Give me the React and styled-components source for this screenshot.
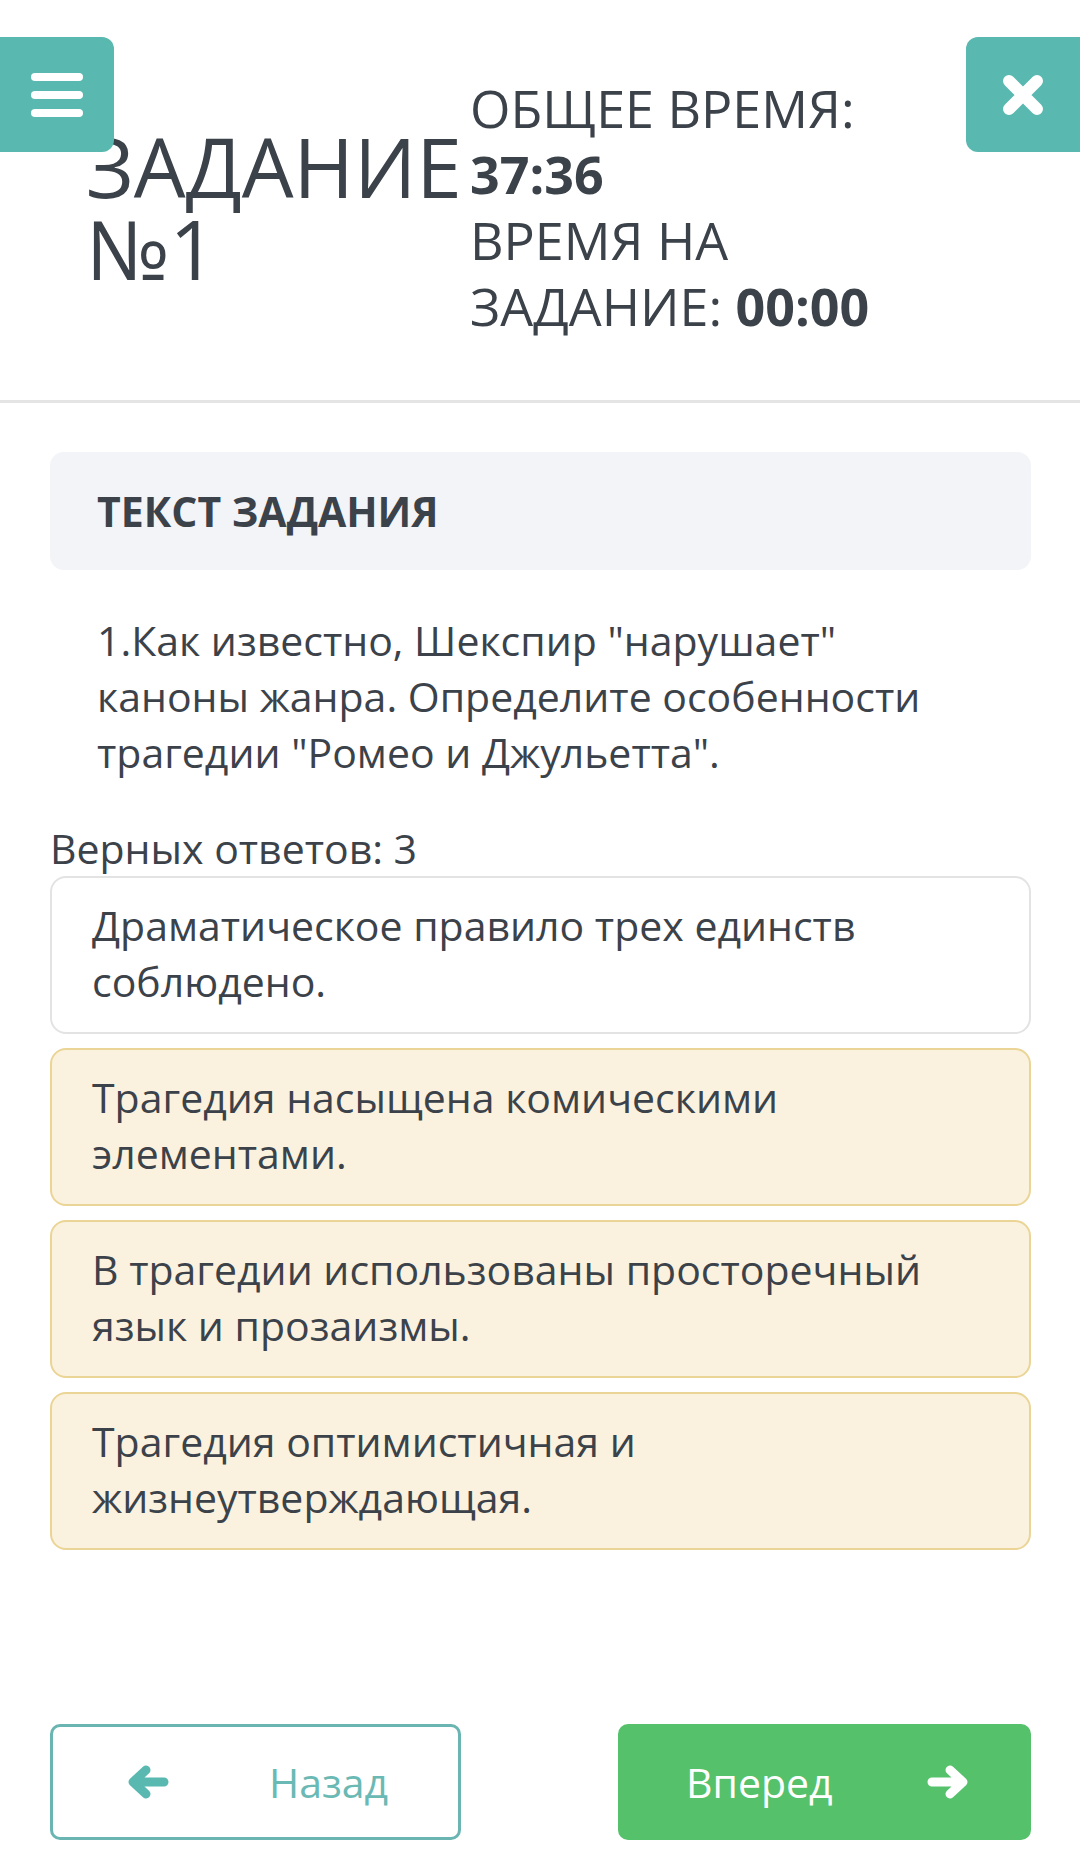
import React from "react";
import styled, { createGlobalStyle } from "styled-components";

const GlobalStyle = createGlobalStyle`
  html, body {
    margin: 0;
    padding: 0;
    background: #ffffff;
  }
  body {
    font-family: "Open Sans", "Noto Sans", sans-serif;
    color: #3c424a;
  }
`;

const Page = styled.div`
  position: relative;
  width: 1080px;
  min-height: 1864px;
  display: flex;
  flex-direction: column;
  box-sizing: border-box;
`;

const Header = styled.header`
  display: flex;
  align-items: center;
  padding: 75px 0 61px 86px;
  border-bottom: 3px solid #e4e4e4;
`;

const Title = styled.h1`
  flex: 0 0 384px;
  margin: 0;
  font-size: 82px;
  line-height: 82px;
  font-weight: 400;
  color: #3c424a;
`;

const Timer = styled.div`
  font-size: 52px;
  line-height: 66px;
  color: #3c424a;

  b {
    font-weight: 700;
  }
`;

const CornerButton = styled.button`
  position: absolute;
  top: 37px;
  ${(p) => (p.side === "left" ? "left: 0;" : "right: 0;")}
  width: 114px;
  height: 115px;
  border: none;
  padding: 0;
  background: #59b8b0;
  border-radius: ${(p) => (p.side === "left" ? "0 12px 12px 0" : "12px 0 0 12px")};
  display: flex;
  align-items: center;
  justify-content: center;
`;

const Content = styled.main`
  display: flex;
  flex-direction: column;
  padding: 49px 49px 0 50px;
`;

const TaskHead = styled.div`
  height: 118px;
  box-sizing: border-box;
  display: flex;
  align-items: center;
  padding-left: 47px;
  background: #f3f4f7;
  border-radius: 14px;
  font-size: 41px;
  font-weight: 700;
  color: #3c424a;
`;

const Question = styled.p`
  margin: 42px 0 40px;
  padding: 0 47px;
  font-size: 41px;
  line-height: 56px;
`;

const Counter = styled.div`
  font-size: 41px;
  line-height: 56px;
`;

const Options = styled.div`
  display: flex;
  flex-direction: column;
  gap: 14px;
`;

const Option = styled.div`
  box-sizing: border-box;
  height: 158px;
  padding: 19px 40px;
  font-size: 41px;
  line-height: 56px;
  border-radius: 16px;
  border: 2px solid ${(p) => (p.selected ? "#ebd596" : "#e3e3e3")};
  background: ${(p) => (p.selected ? "#faf2de" : "#ffffff")};
`;

const Footer = styled.div`
  display: flex;
  justify-content: space-between;
  padding: 174px 49px 22px 50px;
`;

const NavButton = styled.button`
  box-sizing: border-box;
  width: ${(p) => (p.primary ? "413px" : "411px")};
  height: 116px;
  border-radius: 10px;
  border: 3px solid ${(p) => (p.primary ? "#55c16b" : "#6ab5b2")};
  background: ${(p) => (p.primary ? "#55c16b" : "#ffffff")};
  color: ${(p) => (p.primary ? "#ffffff" : "#6ab9b4")};
  font-family: "Open Sans", sans-serif;
  font-size: 41px;
  display: flex;
  align-items: center;
  padding: 0 0 0 ${(p) => (p.primary ? "65px" : "74px")};
  gap: ${(p) => (p.primary ? "94px" : "100px")};

  svg {
    flex: none;
  }
`;

function MenuIcon() {
  return (
    <svg width="54" height="46" viewBox="0 0 54 46">
      <rect x="1" y="1" width="52" height="8" rx="4" fill="#fff" />
      <rect x="1" y="19" width="52" height="8" rx="4" fill="#fff" />
      <rect x="1" y="37" width="52" height="8" rx="4" fill="#fff" />
    </svg>
  );
}

function CloseIcon() {
  return (
    <svg width="42" height="42" viewBox="0 0 42 42">
      <path d="M7 7 L35 35 M35 7 L7 35" stroke="#fff" strokeWidth="12" strokeLinecap="round" />
    </svg>
  );
}

function Arrow({ dir, color }) {
  const d =
    dir === "left"
      ? "M37 17 L7 17 M19 5 L6 17 L19 29"
      : "M5 17 L35 17 M23 5 L36 17 L23 29";
  return (
    <svg width="42" height="34" viewBox="0 0 42 34">
      <path d={d} fill="none" stroke={color} strokeWidth="9" strokeLinecap="round" strokeLinejoin="round" />
    </svg>
  );
}

const answers = [
  { text: "Драматическое правило трех единств соблюдено.", selected: false },
  { text: "Трагедия насыщена комическими элементами.", selected: true },
  { text: "В трагедии использованы просторечный язык и прозаизмы.", selected: true },
  { text: "Трагедия оптимистичная и жизнеутверждающая.", selected: true },
];

export default function App() {
  return (
    <Page>
      <GlobalStyle />
      <Header>
        <Title>
          ЗАДАНИЕ
          <br />
          №1
        </Title>
        <Timer>
          ОБЩЕЕ ВРЕМЯ:
          <br />
          <b>37:36</b>
          <br />
          ВРЕМЯ НА
          <br />
          ЗАДАНИЕ: <b>00:00</b>
        </Timer>
      </Header>
      <CornerButton side="left">
        <MenuIcon />
      </CornerButton>
      <CornerButton side="right">
        <CloseIcon />
      </CornerButton>

      <Content>
        <TaskHead>ТЕКСТ ЗАДАНИЯ</TaskHead>
        <Question>
          1.Как известно, Шекспир "нарушает" каноны жанра. Определите особенности трагедии "Ромео и Джульетта".
        </Question>
        <Counter>Верных ответов: 3</Counter>
        <Options>
          {answers.map((a, i) => (
            <Option key={i} selected={a.selected}>
              {a.text}
            </Option>
          ))}
        </Options>
      </Content>

      <Footer>
        <NavButton>
          <Arrow dir="left" color="#59b8b0" />
          Назад
        </NavButton>
        <NavButton primary>
          Вперед
          <Arrow dir="right" color="#ffffff" />
        </NavButton>
      </Footer>
    </Page>
  );
}
